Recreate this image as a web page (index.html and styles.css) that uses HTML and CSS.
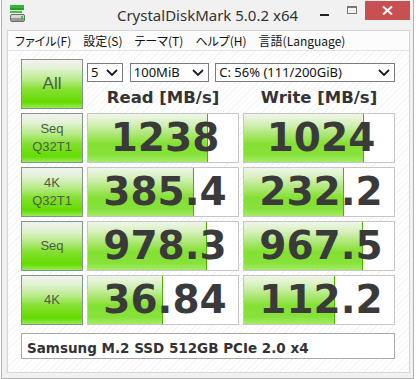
FILE: index.html
```html
<!DOCTYPE html>
<html lang="ja">
  <head>
    <meta charset="UTF-8" />
    <title>CrystalDiskMark 5.0.2 x64</title>
    <link rel="stylesheet" href="styles.css">
  </head>
  <body>
    <div class="window">
      <div class="titlebar">
        <div class="app-icon">
          <svg width="16" height="18" viewBox="0 0 16 18">
            <rect x="0" y="0" width="14" height="3" fill="#35b535" />
            <rect x="0" y="3" width="14" height="2" fill="#2a9a2a" />
            <rect x="0" y="6" width="12" height="2" fill="#42c242" />
            <rect x="0.5" y="9.5" width="14" height="7" rx="1.5" fill="#d8d8d8" stroke="#6c6c6c" />
            <rect x="1" y="13" width="13" height="3" fill="#9a9a9a" />
            <rect x="11" y="11" width="2" height="4" fill="#3cc43c" />
          </svg>
        </div>
        <div class="title">CrystalDiskMark 5.0.2 x64</div>
        <div class="controls">
          <span class="ctl"><i class="min"></i></span>
          <span class="ctl"><i class="max"></i></span>
          <span class="ctl close">
            <svg width="11" height="9" viewBox="0 0 11 9">
              <path d="M1 0.5 L10 8.5 M10 0.5 L1 8.5" stroke="#fff" stroke-width="2" />
            </svg>
          </span>
        </div>
      </div>

      <div class="client">
        <ul class="menu">
          <li>ファイル(F)</li>
          <li>設定(S)</li>
          <li>テーマ(T)</li>
          <li>ヘルプ(H)</li>
          <li>言語(Language)</li>
        </ul>

        <div class="panel">
          <div class="board">
            <div class="run all">All</div>
            <div class="top">
              <div class="selects">
                <div class="pick count">5<svg width="12" height="7" viewBox="0 0 12 7"><path d="M1 1 L6 6 L11 1" /></svg></div>
                <div class="pick size">100MiB<svg width="12" height="7" viewBox="0 0 12 7"><path d="M1 1 L6 6 L11 1" /></svg></div>
                <div class="pick drive">C: 56% (111/200GiB)<svg width="12" height="7" viewBox="0 0 12 7"><path d="M1 1 L6 6 L11 1" /></svg></div>
              </div>
              <div class="heads">
                <span>Read [MB/s]</span>
                <span>Write [MB/s]</span>
              </div>
            </div>

            <div class="run">Seq<br />Q32T1</div>
            <div class="bar"><div class="fill" style="width: 80%"></div><span>1238</span></div>
            <div class="bar"><div class="fill" style="width: 80%"></div><span>1024</span></div>

            <div class="run">4K<br />Q32T1</div>
            <div class="bar"><div class="fill" style="width: 70.5%"></div><span>385.4</span></div>
            <div class="bar"><div class="fill" style="width: 66.5%"></div><span>232.2</span></div>

            <div class="run">Seq</div>
            <div class="bar"><div class="fill" style="width: 79%"></div><span>978.3</span></div>
            <div class="bar"><div class="fill" style="width: 79.5%"></div><span>967.5</span></div>

            <div class="run">4K</div>
            <div class="bar"><div class="fill" style="width: 50%"></div><span>36.84</span></div>
            <div class="bar"><div class="fill" style="width: 60.5%"></div><span>112.2</span></div>

            <div class="comment">Samsung M.2 SSD 512GB PCIe 2.0 x4</div>
          </div>
        </div>
      </div>
    </div>
  </body>
</html>
```

FILE: styles.css
```css
* {
  margin: 0;
  padding: 0;
  box-sizing: border-box;
}

body {
  width: 416px;
  height: 379px;
  overflow: hidden;
  background-color: #fff;
  font-family: "Noto Sans", sans-serif;
  color: #222;
}

.window {
  width: 413px;
  height: 379px;
  margin-left: 1px;
  border: 1px solid #b4b4b4;
  border-top: none;
  background-color: #f1f1f1;
  display: flex;
  flex-direction: column;
}

/* title bar */
.titlebar {
  height: 30px;
  display: grid;
  grid-template-columns: 1fr auto 1fr;
  align-items: start;
}

.app-icon {
  padding: 5px 0 0 8px;
}

.title {
  font-size: 15px;
  line-height: 30px;
  color: #333;
}

.controls {
  display: flex;
  justify-content: flex-end;
  padding-right: 3px;
  padding-top: 1px;
}

.ctl {
  width: 27px;
  height: 19px;
  display: flex;
  align-items: center;
  justify-content: center;
}

.ctl .min {
  width: 9px;
  height: 2px;
  margin-top: 8px;
  background-color: #222;
}

.ctl .max {
  width: 10px;
  height: 8px;
  margin-top: -2px;
  border: 1px solid #777;
  border-top-width: 2px;
}

.ctl.close {
  width: 45px;
  background-color: #c75050;
}

/* client area */
.client {
  width: 403px;
  height: 343px;
  margin-left: 5px;
  border: 1px solid #d6d6d6;
  display: flex;
  flex-direction: column;
}

.menu {
  list-style: none;
  height: 19px;
  background-color: #fcfcfc;
  display: flex;
  gap: 12px;
  padding-left: 7px;
  font-family: "Noto Sans CJK JP", sans-serif;
  font-feature-settings: "palt";
  font-size: 12px;
  line-height: 19px;
  color: #111;
}

.panel {
  flex: 1;
  border-top: 1px solid #e2e2e2;
  padding: 8px 0 0 13px;
  background-color: #fff;
  background-image: repeating-linear-gradient(-45deg, #fff 0 3px, #f5f5f5 3px 4px);
}

.board {
  display: grid;
  grid-template-columns: 62px 152px 152px;
  grid-template-rows: 50px repeat(4, 50px) 30px;
  column-gap: 4px;
  row-gap: 4px;
}

/* green buttons */
.run {
  border: 1px solid #859585;
  background: linear-gradient(to bottom, #f2f2f2 0%, #e2f2d4 18%, #b6ea86 42%, #84e030 62%, #64dc00 88%, #96ea5a 100%);
  color: #4f5a48;
  font-family: "Liberation Sans", sans-serif;
  font-size: 13px;
  line-height: 18px;
  text-align: center;
  display: flex;
  align-items: center;
  justify-content: center;
}

.run.all {
  font-size: 17px;
}

.top {
  grid-column: 2 / 4;
  display: flex;
  flex-direction: column;
}

.selects {
  display: flex;
  gap: 6px;
  margin-top: 4px;
}

.pick {
  height: 19px;
  border: 1px solid #7a7a7a;
  background-color: #fff;
  font-size: 13px;
  line-height: 17px;
  padding: 0 4px 0 3px;
  display: flex;
  align-items: center;
  justify-content: space-between;
  color: #111;
}

.pick svg path {
  fill: none;
  stroke: #1a1a2a;
  stroke-width: 1.8;
}

.pick.count {
  width: 36px;
}

.pick.size {
  width: 80px;
  margin-left: 1px;
}

.pick.drive {
  width: 181px;
}

.heads {
  display: grid;
  grid-template-columns: 152px 152px;
  column-gap: 4px;
  margin-top: 6px;
  font-family: "DejaVu Sans", sans-serif;
  font-weight: bold;
  font-size: 16.5px;
  color: #333;
  text-align: center;
}

/* result bars */
.bar {
  border: 1px solid #c6c6c6;
  background-color: #fff;
  display: grid;
}

.bar > * {
  grid-area: 1 / 1;
}

.fill {
  border-right: 1px solid #4cb000;
  background: linear-gradient(to bottom, #f0f6ea 0%, #d6f0bc 20%, #a6e66a 45%, #84e032 62%, #86e23a 85%, #a4ec68 100%);
}

.bar span {
  font-family: "DejaVu Sans", sans-serif;
  font-weight: bold;
  font-size: 39px;
  line-height: 48px;
  color: #3a3a3a;
  text-align: center;
  padding-left: 4px;
}

.comment {
  grid-column: 1 / 4;
  margin-top: 4px;
  border: 1px solid #a8a8a8;
  background-color: #fff;
  font-family: "DejaVu Sans", sans-serif;
  font-weight: bold;
  font-size: 13.5px;
  line-height: 28px;
  padding-left: 5px;
  color: #333;
}
```
